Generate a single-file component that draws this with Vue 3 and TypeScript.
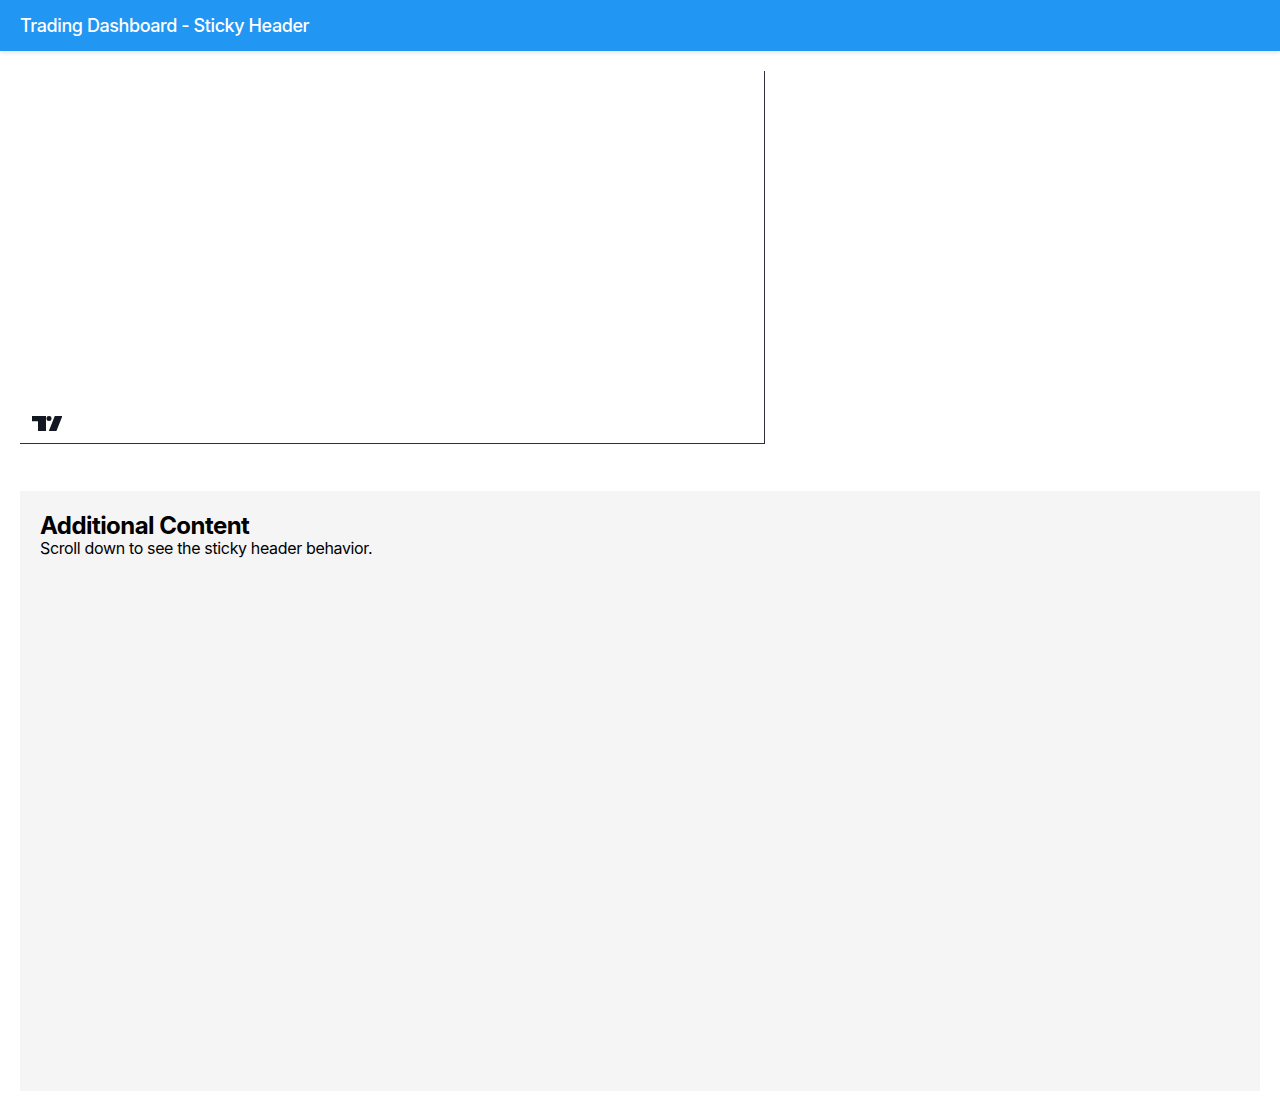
<script setup lang="ts">
const title: string = 'Trading Dashboard - Sticky Header'
</script>

<template>
  <header class="header">{{ title }}</header>
  <main class="main">
    <div class="chart">
      <svg class="logo" viewBox="0 0 30.4 15.6" width="30.4" height="15.6" aria-label="TradingView">
        <path d="M14 15.6H6V5.2H0V0h14zM24.2 15.6H16.6L22.8 0h7.6z" fill="#131722" />
        <circle cx="17" cy="2.5" r="2.5" fill="#131722" />
      </svg>
    </div>
    <section class="content">
      <h2 class="heading">Additional Content</h2>
      <p class="text">Scroll down to see the sticky header behavior.</p>
    </section>
  </main>
</template>

<style>
html, body { margin: 0; background: #fff; }
</style>

<style scoped>
.header {
  box-sizing: border-box;
  height: 51px;
  padding: 0 20px;
  display: flex;
  align-items: center;
  background: #2196f3;
  color: #fff;
  font: 500 18px/22px Inter, sans-serif;
  letter-spacing: -0.0235em;
  box-shadow: 0 2px 4px rgba(0, 0, 0, 0.1);
  position: relative;
}
.main {
  padding: 20px;
  font-family: Inter, sans-serif;
}
.chart {
  box-sizing: border-box;
  position: relative;
  width: 745px;
  height: 373px;
  border-right: 1px solid #2e2e3e;
  border-bottom: 1px solid #2e2e3e;
}
.logo {
  position: absolute;
  left: 12px;
  bottom: 11.7px;
  display: block;
}
.content {
  box-sizing: border-box;
  height: 600px;
  margin-top: 47px;
  padding: 20px;
  background: #f5f5f5;
  color: #000;
}
.heading {
  margin: 0;
  font-size: 24px;
  font-weight: 700;
  line-height: 29px;
  letter-spacing: -0.023em;
}
.text {
  margin: 0;
  font-size: 16px;
  line-height: 17px;
  letter-spacing: -0.022em;
}
</style>
